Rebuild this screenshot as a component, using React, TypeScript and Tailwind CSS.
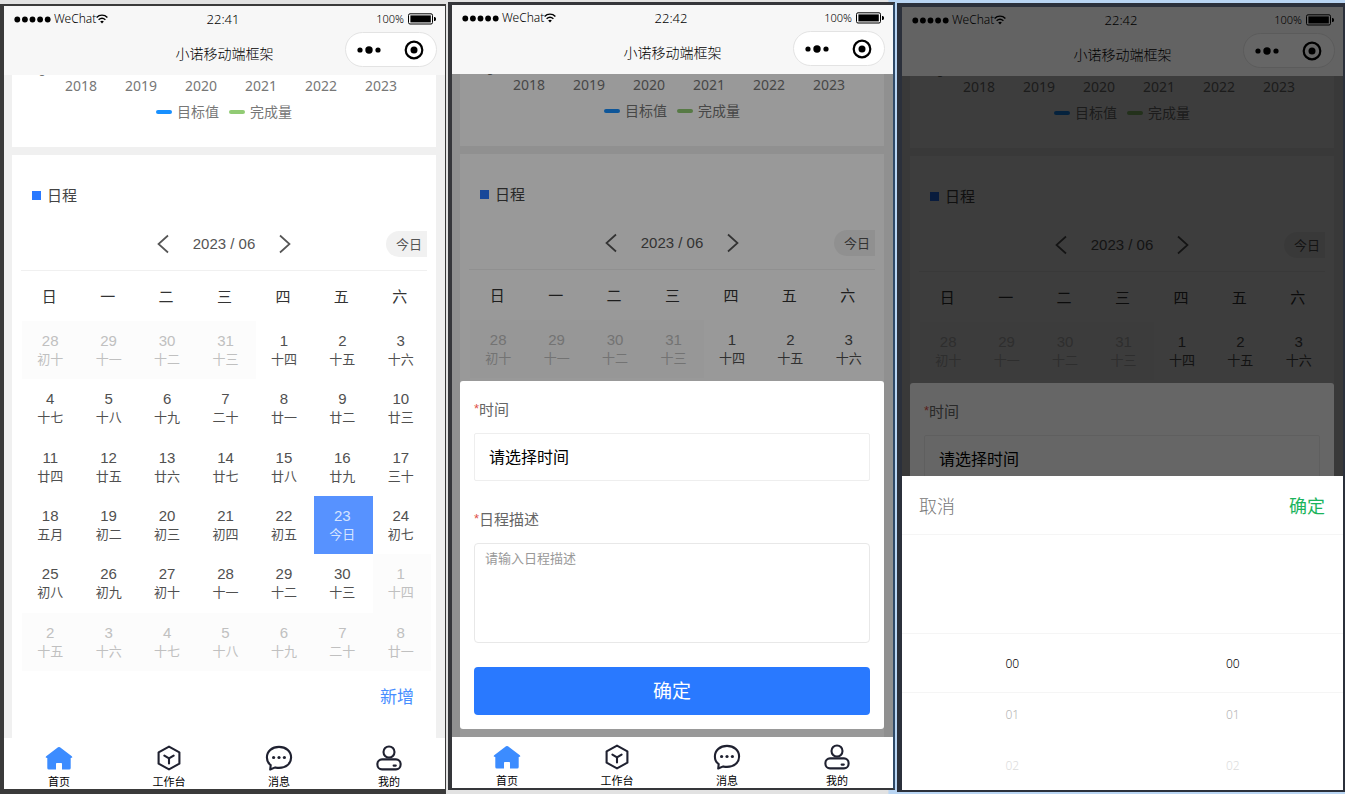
import type { ReactNode } from "react";

const YEARS = ["2018", "2019", "2020", "2021", "2022", "2023"];
const WEEKDAYS = ["日", "一", "二", "三", "四", "五", "六"];

type Day = { day: number; lunar: string; outside?: boolean; today?: boolean };

const out = (day: number, lunar: string): Day => ({ day, lunar, outside: true });
const d = (day: number, lunar: string): Day => ({ day, lunar });

const WEEKS: Day[][] = [
  [out(28, "初十"), out(29, "十一"), out(30, "十二"), out(31, "十三"), d(1, "十四"), d(2, "十五"), d(3, "十六")],
  [d(4, "十七"), d(5, "十八"), d(6, "十九"), d(7, "二十"), d(8, "廿一"), d(9, "廿二"), d(10, "廿三")],
  [d(11, "廿四"), d(12, "廿五"), d(13, "廿六"), d(14, "廿七"), d(15, "廿八"), d(16, "廿九"), d(17, "三十")],
  [d(18, "五月"), d(19, "初二"), d(20, "初三"), d(21, "初四"), d(22, "初五"), { day: 23, lunar: "今日", today: true }, d(24, "初七")],
  [d(25, "初八"), d(26, "初九"), d(27, "初十"), d(28, "十一"), d(29, "十二"), d(30, "十三"), out(1, "十四")],
  [out(2, "十五"), out(3, "十六"), out(4, "十七"), out(5, "十八"), out(6, "十九"), out(7, "二十"), out(8, "廿一")],
];

function WifiIcon() {
  return (
    <svg viewBox="0 0 12 10" className="h-2.5 w-3" fill="none" stroke="#000" strokeWidth="1.4" aria-hidden="true">
      <path d="M0.6 3.4C3.6 0.4 8.4 0.4 11.4 3.4" />
      <path d="M2.6 5.7C4.6 3.9 7.4 3.9 9.4 5.7" />
      <path d="M4.2 7.4C5.2 6.5 6.8 6.5 7.8 7.4L6 9.4Z" fill="#000" stroke="none" />
    </svg>
  );
}

function BatteryIcon() {
  return (
    <svg viewBox="0 0 28 12" className="h-3 w-7" aria-hidden="true">
      <rect x="0.5" y="0.8" width="24" height="10.2" rx="1.5" fill="none" stroke="#000" />
      <rect x="2.4" y="2.4" width="20.4" height="7" fill="#000" />
      <path d="M26 4h0.6c1 0 1.4 1 1.4 2s-0.4 2-1.4 2H26z" fill="#000" />
    </svg>
  );
}

function StatusHeader({ time }: { time: string }) {
  return (
    <header className="flex h-[69px] flex-col bg-[#f7f7f7] text-black">
      <div className="grid h-[26px] grid-cols-3 items-center pr-[9px] pl-2.5 font-light">
        <div className="flex items-center">
          <svg viewBox="0 0 37 7" className="mr-[3px] h-[7px] w-[37px]" aria-hidden="true">
            <circle cx="3.3" cy="3.5" r="2.9" />
            <circle cx="10.9" cy="3.5" r="2.9" />
            <circle cx="18.5" cy="3.5" r="2.9" />
            <circle cx="26.1" cy="3.5" r="2.9" />
            <circle cx="33.7" cy="3.5" r="2.9" />
          </svg>
          <span className="font-['Noto_Sans',sans-serif] text-[12px] leading-4">WeChat</span>
          <WifiIcon />
        </div>
        <span className="pr-1 text-center font-['Noto_Sans',sans-serif] text-[13px] leading-4">{time}</span>
        <div className="flex items-center justify-end gap-1">
          <span className="font-['Noto_Sans',sans-serif] text-[11px] leading-4">100%</span>
          <BatteryIcon />
        </div>
      </div>
      <div className="grid h-[35px] grid-cols-[1fr_auto_1fr] items-center pr-2 pl-2">
        <h1 className="col-start-2 pt-2 text-[14px] leading-5 font-light">小诺移动端框架</h1>
        <div className="flex h-[35px] w-[92px] items-center justify-between justify-self-end rounded-full border border-[#e3e3e3] bg-white px-2.5">
          <button type="button" aria-label="更多">
            <svg viewBox="0 0 26 10" className="h-2.5 w-[26px]" aria-hidden="true">
              <circle cx="4" cy="5" r="2.6" />
              <circle cx="13" cy="5" r="3.7" />
              <circle cx="22" cy="5" r="2.6" />
            </svg>
          </button>
          <button type="button" aria-label="关闭">
            <svg viewBox="0 0 24 24" className="h-6 w-6" aria-hidden="true">
              <circle cx="12" cy="12" r="8.3" fill="none" stroke="#000" strokeWidth="2.2" />
              <circle cx="12" cy="12" r="3.5" />
            </svg>
          </button>
        </div>
      </div>
    </header>
  );
}

function ChartFooter() {
  return (
    <section className="h-[72px] overflow-hidden bg-white text-[14px] leading-4 text-[#777]">
      <div className="relative">
        <span className="absolute -top-3 left-[26px] text-[14px] leading-4">0</span>
      </div>
      <div className="flex pt-[3px] pl-[39px] font-['Noto_Sans',sans-serif]">
        {YEARS.map((y) => (
          <span key={y} className="w-[60px] text-center">{y}</span>
        ))}
      </div>
      <div className="mt-2.5 flex justify-center gap-2.5">
        <span className="flex items-center gap-[5px]">
          <i className="h-1 w-4 rounded-xs bg-[#1890ff]" />目标值
        </span>
        <span className="flex items-center gap-[5px]">
          <i className="h-1 w-4 rounded-xs bg-[#91cb74]" />完成量
        </span>
      </div>
    </section>
  );
}

function DayCell({ day, lunar, outside, today }: Day) {
  const tone = today
    ? "bg-[#5792ff] text-[#d5e4ff]"
    : outside
      ? "bg-[#fcfcfc] text-[#c0c0c0]"
      : "text-[#505050]";
  return (
    <td className={`p-0 text-center align-middle ${tone}`}>
      <button type="button" className="flex w-full flex-col items-center pr-0.5">
        <span className="font-['Liberation_Sans',sans-serif] text-[15px] leading-[18px]">{day}</span>
        <span className="text-[13px] leading-[18px]">{lunar}</span>
      </button>
    </td>
  );
}

function Schedule() {
  return (
    <section className="flex h-[583px] flex-col overflow-hidden bg-white">
      <h2 className="flex items-center gap-1.5 pt-[30px] pl-5 text-[15px] leading-5 text-[#444]">
        <i className="h-[9px] w-[9px] bg-[#2979ff]" />
        日程
      </h2>
      <div className="mx-[9px] mt-3 grid h-[54px] grid-cols-[1fr_auto_1fr] items-center border-b border-[#f0f0f0]">
        <div className="col-start-2 flex items-center gap-[23px] text-[#555]">
          <button type="button" aria-label="上个月">
            <svg viewBox="0 0 14 20" className="h-5 w-3.5" fill="none" stroke="currentColor" strokeWidth="1.7" aria-hidden="true">
              <path d="M12 1.5L2.5 10L12 18.5" />
            </svg>
          </button>
          <span className="font-['Liberation_Sans',sans-serif] text-[15px] leading-5">2023 / 06</span>
          <button type="button" aria-label="下个月">
            <svg viewBox="0 0 14 20" className="h-5 w-3.5" fill="none" stroke="currentColor" strokeWidth="1.7" aria-hidden="true">
              <path d="M2 1.5L11.5 10L2 18.5" />
            </svg>
          </button>
        </div>
        <button type="button" className="h-[26px] justify-self-end rounded-l-full bg-[#f1f1f1] pr-[5px] pl-2.5 text-[13px] leading-5 text-[#555]">
          今日
        </button>
      </div>
      <div className="pr-[5px] pl-2.5">
        <table className="h-[400px] w-full table-fixed border-collapse">
          <thead>
            <tr className="h-[50px]">
              {WEEKDAYS.map((w) => (
                <th key={w} className="py-0 pr-1 pl-0 text-center text-[15px] leading-5 font-normal text-[#333]">{w}</th>
              ))}
            </tr>
          </thead>
          <tbody>
            {WEEKS.map((week, i) => (
              <tr key={i}>
                {week.map((c) => (
                  <DayCell key={`${c.day}-${c.lunar}`} {...c} />
                ))}
              </tr>
            ))}
          </tbody>
        </table>
      </div>
      <button type="button" className="mt-3.5 mr-[22px] self-end text-[17px] leading-6 text-[#478eff]">新增</button>
    </section>
  );
}

function HomeIcon() {
  return (
    <svg viewBox="0 0 28 26" className="h-[26px] w-7" fill="#3c8cff" aria-hidden="true">
      <path d="M13 2.3Q14 1.5 15 2.3L26.8 11.2Q27.9 12.6 26.4 12.8L25.7 13V23Q25.7 24.6 24.2 24.6H17V18.8Q17 18 16.2 18H11.8Q11 18 11 18.8V24.6H3.8Q2.3 24.6 2.3 23V13L1.6 12.8Q0.1 12.6 1.2 11.2Z" />
    </svg>
  );
}

function WorkIcon() {
  return (
    <svg viewBox="0 0 28 26" className="h-[26px] w-7" fill="none" stroke="#1f2130" strokeWidth="2.1" strokeLinejoin="round" strokeLinecap="round" aria-hidden="true">
      <path d="M14 1.6L24.4 7.3V18.7L14 24.4L3.6 18.7V7.3Z" />
      <path d="M9.4 10.6L14 13.4L18.6 10.6M14 13.4V18.4" />
    </svg>
  );
}

function MessageIcon() {
  return (
    <svg viewBox="0 0 28 26" className="h-[26px] w-7" fill="none" stroke="#1f2130" strokeWidth="2.1" strokeLinejoin="round" aria-hidden="true">
      <path d="M5.2 24.5L5.7 20.2C3 18.2 1.9 15.6 1.9 12.5C1.9 6.4 7 1.9 14 1.9S26.1 6.4 26.1 12.5S21 22.9 14 22.9C12.6 22.9 11.4 22.7 10.2 22.4Z" />
      <g fill="#1f2130" stroke="none">
        <circle cx="8.6" cy="12.5" r="1.6" />
        <circle cx="14" cy="12.5" r="1.6" />
        <circle cx="19.4" cy="12.5" r="1.6" />
      </g>
    </svg>
  );
}

function UserIcon() {
  return (
    <svg viewBox="0 0 28 26" className="h-[26px] w-7" fill="none" stroke="#1f2130" strokeWidth="2.1" strokeLinecap="round" aria-hidden="true">
      <circle cx="14" cy="7" r="5.5" />
      <rect x="2.4" y="14.4" width="23.2" height="10" rx="4.6" />
      <path d="M18.6 20.6H20.8" />
    </svg>
  );
}

const TABS = [
  { label: "首页", icon: <HomeIcon /> },
  { label: "工作台", icon: <WorkIcon /> },
  { label: "消息", icon: <MessageIcon /> },
  { label: "我的", icon: <UserIcon /> },
];

function TabBar() {
  return (
    <nav className="grid h-[51px] grid-cols-4 bg-white pr-px">
      {TABS.map((t) => (
        <a key={t.label} href="#" className="flex flex-col items-center pt-[7px] text-[11px] leading-[14px] text-black">
          {t.icon}
          <span className="mt-1">{t.label}</span>
        </a>
      ))}
    </nav>
  );
}

function RequiredMark() {
  return <span className="font-['Liberation_Sans',sans-serif] text-[13px] text-[#e0524b]">*</span>;
}

function ScheduleForm({ id }: { id: string }) {
  return (
    <form className="flex w-full flex-col rounded-[3px] bg-white px-3.5 pt-[18px] pb-3.5 text-[15px] leading-5 text-[#666]">
      <label htmlFor={`${id}-time`} className="flex h-5"><RequiredMark />时间</label>
      <button id={`${id}-time`} type="button" className="mt-3.5 h-12 rounded-xs border border-[#eee] px-3.5 text-left text-[16px] text-black">
        请选择时间
      </button>
      <label htmlFor={`${id}-desc`} className="mt-7 flex h-5"><RequiredMark />日程描述</label>
      <textarea
        id={`${id}-desc`}
        placeholder="请输入日程描述"
        className="mt-3.5 h-[100px] resize-none rounded-[4px] border border-[#e8e8e8] px-2.5 py-1 text-[13px] placeholder:text-[#999]"
      />
      <button type="submit" className="mt-6 h-12 rounded-[4px] bg-[#2979ff] text-[19px] text-white">确定</button>
    </form>
  );
}

function Screen({ time, overlay }: { time: string; overlay?: ReactNode }) {
  return (
    <>
      <StatusHeader time={time} />
      <div className="relative">
        <div className="flex flex-col gap-2 bg-[#f0f0f0] pr-[9px] pl-2">
          <ChartFooter />
          <Schedule />
        </div>
        {overlay && (
          <div className="absolute inset-0 flex items-end bg-black/40 pr-[9px] pb-2 pl-2">{overlay}</div>
        )}
      </div>
      <TabBar />
    </>
  );
}

function PickerColumn({ label }: { label: string }) {
  return (
    <ul aria-label={label} className="flex flex-1 flex-col items-center font-['Noto_Sans',sans-serif] text-[12px] leading-[51px] font-light">
      <li className="text-black">00</li>
      <li className="text-[#b5b5b5]">01</li>
      <li className="text-[#dcdcdc]">02</li>
    </ul>
  );
}

function TimePicker() {
  return (
    <div className="h-[314px] w-full overflow-hidden bg-white">
      <div className="flex h-[59px] items-center justify-between border-b border-[#f5f5f5] pt-[3px] pr-[18px] pl-[17px] text-[18px]">
        <button type="button" className="font-light text-[#777]">取消</button>
        <button type="button" className="text-[#1bb45c]">确定</button>
      </div>
      <div className="relative pt-[103px]">
        <div className="absolute inset-x-0 top-[98px] h-[60px] border-y border-[#f5f5f5]" />
        <div className="relative flex">
          <PickerColumn label="时" />
          <PickerColumn label="分" />
        </div>
      </div>
    </div>
  );
}

export default function App() {
  return (
    <main className="grid min-h-screen grid-cols-[446fr_447fr_448fr] items-start gap-x-0.5 bg-[linear-gradient(90deg,#e2e2e2_66%,#b9d5f3_66.1%)] font-['Open_Sans','Noto_Sans_CJK_SC',sans-serif]">
      <div className="mt-1 border-t-2 border-r border-b-[5px] border-l-4 border-[#3a3a3a]">
        <Screen time="22:41" />
      </div>
      <div className="mt-0.5 border-t-[3px] border-r-2 border-b-2 border-l-4 border-[#35363a] border-r-[#2f4a68]">
        <Screen time="22:42" overlay={<ScheduleForm id="form" />} />
      </div>
      <div className="relative mt-[3px] border-t-4 border-r-2 border-b-2 border-l-[5px] border-[#2b303b]">
        <Screen time="22:42" overlay={<ScheduleForm id="dimmed" />} />
        <div className="absolute inset-0 flex items-end bg-black/60">
          <TimePicker />
        </div>
      </div>
    </main>
  );
}
